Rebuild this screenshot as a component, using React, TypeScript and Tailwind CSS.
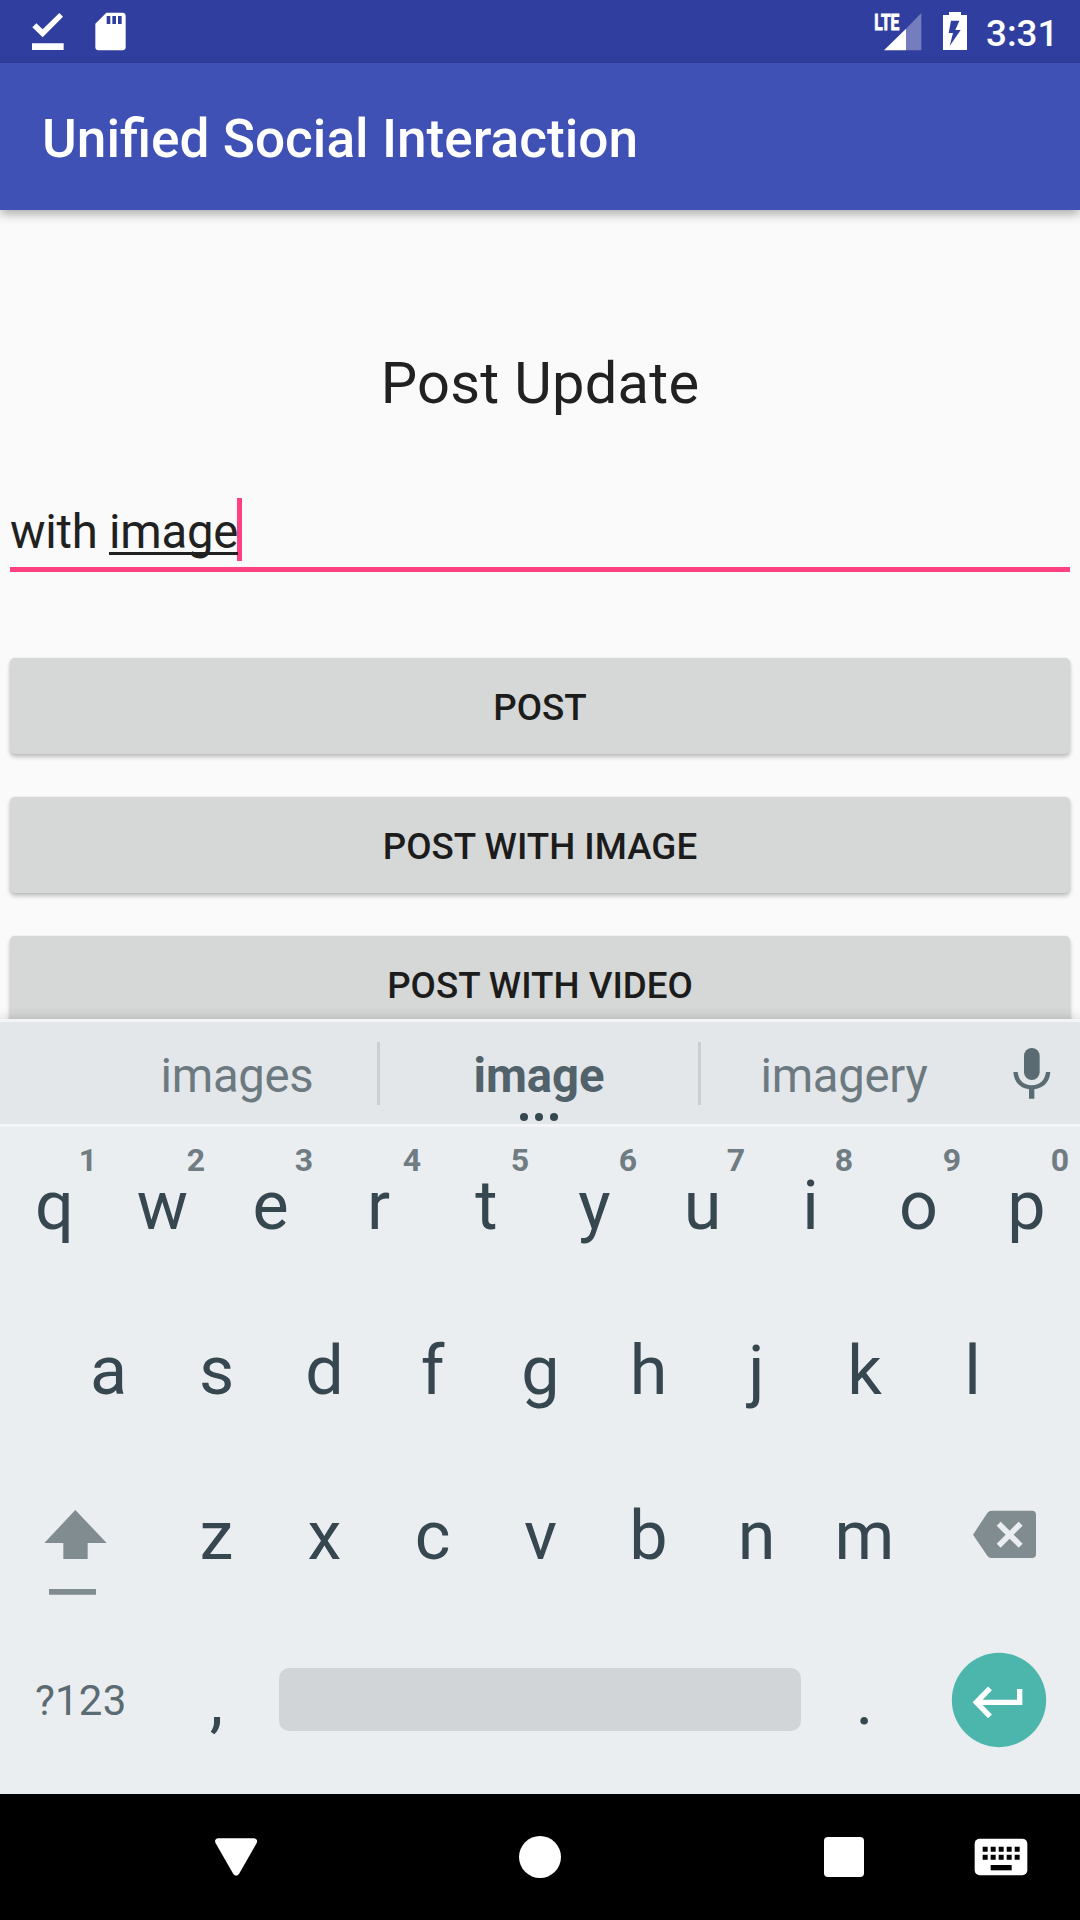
import React from "react";

function StatusBar() {
  return (
    <div className="flex h-[63px] shrink-0 items-start bg-[#303f9f] pl-8 text-white">
      <svg className="mt-3 h-[39px] w-8" viewBox="96 36 96 117" fill="white">
        <path d="M97 82 109 70 128 88 178 39 189 50 128 112ZM96 130H191V150H96Z" />
      </svg>
      <svg className="mt-3 ml-[31px] h-[39px] w-[31px]" viewBox="285 36 93 117" fill="white" fillRule="evenodd">
        <path d="M319 38H367Q377 38 377 48V141Q377 151 367 151H296Q286 151 286 141V71ZM320 48V72H331V48ZM337 48V72H348V48ZM354 48V72H365V48Z" />
      </svg>
      <svg className="mt-3 ml-auto h-[39px] w-12 overflow-visible" viewBox="162 36 144 117" fill="white">
        <text x="163" y="89" fontFamily="Roboto" fontWeight="700" fontSize="68" textLength="75" lengthAdjust="spacingAndGlyphs" stroke="white" strokeWidth="3">LTE</text>
        <path d="M258 86 304 39V151H258Z" fillOpacity="0.33" />
        <path d="M192 151 258 86V151Z" />
      </svg>
      <svg className="mt-3 ml-5 h-[39px] w-[26px]" viewBox="366 36 78 117" fill="white" fillRule="evenodd">
        <path d="M387 36H423V45H441V150H369V45H387ZM393 62 386 99H399L389 138 422 90H406L418 62Z" />
      </svg>
      <div className="ml-[18px] w-[94px] pt-[2px] text-[36.75px] leading-[63px] font-medium">3:31</div>
    </div>
  );
}

function PostButton({ label }: { label: string }) {
  return (
    <button className="h-[96px] w-full shrink-0 rounded-[5px] bg-[#d6d8d7] pt-px text-[36.75px] leading-[97px] font-medium text-[#1c1c1c] shadow-[0_3px_4px_rgba(0,0,0,0.24),0_0_2px_rgba(0,0,0,0.1)]">
      {label}
    </button>
  );
}

function Key({ label, hint }: { label: string; hint?: string }) {
  return (
    <div className="relative h-[165px] w-[108px] shrink-0 pl-px text-center text-[68.25px] leading-[167px] text-[#37474f]">
      {label}
      {hint && (
        <span className="absolute top-[21px] right-[11px] text-[32px] leading-8 font-bold text-[#6f7c82]">{hint}</span>
      )}
    </div>
  );
}

function Suggestions() {
  return (
    <div className="relative flex h-[108px] shrink-0 items-center border-y-[3px] border-[#f3f5f6] bg-[#e3e7ea] pl-[97px] text-[47.25px] leading-[102px] text-[#6c7a80]">
      <div className="w-[280px] pt-[6px] text-center tracking-[-0.3px]">images</div>
      <div className="h-[63px] w-[3px] bg-[#c9cfd2]" />
      <div className="w-[318px] pt-[6px] text-center font-bold text-[#52626a]">image</div>
      <div className="h-[63px] w-[3px] bg-[#c9cfd2]" />
      <div className="w-[286px] pt-[6px] text-center tracking-[-0.3px]">imagery</div>
      <svg className="ml-[26px] h-[53px] w-[38px]" viewBox="879 138 114 159" fill="#5b6b72">
        <rect x="912" y="141" width="47" height="96" rx="23.5" />
        <path d="M880 213H893Q898 252 935 253Q972 252 978 213H991Q987 258 943 265V293H927V265Q884 258 880 213Z" />
      </svg>
      <div className="absolute bottom-[3px] left-[520px] flex gap-[7px]">
        <i className="size-2 rounded-full bg-[#37474f]" />
        <i className="size-2 rounded-full bg-[#37474f]" />
        <i className="size-2 rounded-full bg-[#37474f]" />
      </div>
    </div>
  );
}

function Keyboard() {
  return (
    <div className="relative flex h-[775px] shrink-0 flex-col bg-[#ebeef1] shadow-[0_0_12px_rgba(0,0,0,0.2)]">
      <Suggestions />
      <div className="-mt-1 flex">
        {"qwertyuiop".split("").map((k, i) => (
          <Key key={k} label={k} hint={String((i + 1) % 10)} />
        ))}
      </div>
      <div className="flex pl-[54px]">
        {"asdfghjkl".split("").map((k) => (
          <Key key={k} label={k} />
        ))}
      </div>
      <div className="flex">
        <div className="w-[162px] pt-14 pl-11">
          <svg className="h-[87px] w-[63px]" viewBox="132 117 189 261" fill="#808c90">
            <path d="M226 120 320 219H263V267H190V219H133ZM147 357H288V374H147Z" />
          </svg>
        </div>
        {"zxcvbnm".split("").map((k) => (
          <Key key={k} label={k} />
        ))}
        <div className="pt-[57px] pl-[54px]">
          <svg className="h-[49px] w-[65px]" viewBox="696 120 195 147">
            <path d="M754 122H876Q888 122 888 134V252Q888 264 876 264H754Q747 264 742 257L699 194 742 129Q747 122 754 122Z" fill="#808c90" />
            <path d="M776 161 842 227M842 161 776 227" stroke="#ebeef1" strokeWidth="17" />
          </svg>
        </div>
      </div>
      <div className="flex items-center">
        <div className="w-[162px] pl-[35px] text-[42px] leading-[165px] tracking-[0.2px] text-[#5b6b72]">?123</div>
        <Key label="," />
        <div className="mx-[9px] mb-[2px] h-[63px] w-[522px] rounded-[10px] bg-[#d1d5d8]" />
        <Key label="." />
        <svg className="mb-[2px] ml-[33px] h-24 w-24" viewBox="633 546 288 288">
          <circle cx="777" cy="690" r="141.5" fill="#4db6ac" />
          <path d="M839 657V697H712M750 655 709 697 750 739" fill="none" stroke="white" strokeWidth="16" />
        </svg>
      </div>
    </div>
  );
}

function NavBar() {
  return (
    <div className="flex h-[126px] shrink-0 items-center bg-black pl-[215px]">
      <svg className="h-[42px] w-[42px]" viewBox="105 168 126 126" fill="white">
        <path d="M115 175H222Q235 177 230 189L177 282Q168 292 160 282L107 190Q101 177 115 175Z" />
      </svg>
      <div className="ml-[262px] size-[42px] rounded-full bg-white" />
      <div className="ml-[263px] size-10 rounded-[4px] bg-white" />
      <svg className="ml-[110px] h-[38px] w-[54px]" viewBox="703 175 162 114">
        <rect x="705" y="177" width="158" height="110" rx="15" fill="white" />
        {[729, 753, 777, 801, 825].map((x) => (
          <path key={x} d={`M${x} 201h15v15h-15ZM${x} 225h15v15h-15Z`} />
        ))}
        <rect x="753" y="256" width="63" height="16" />
      </svg>
    </div>
  );
}

export default function App() {
  return (
    <div className="flex h-[1920px] w-[1080px] flex-col overflow-hidden bg-[#fafafa] font-[Roboto,sans-serif]">
      <StatusBar />
      <header className="relative z-10 h-[147px] shrink-0 bg-[#3f51b5] pt-[3px] pl-[42px] text-[53.2px] leading-[147px] font-medium text-white shadow-[0_4px_10px_rgba(0,0,0,0.32)]">
        Unified Social Interaction
      </header>
      <main className="flex h-[809px] shrink-0 flex-col overflow-hidden px-[10px]">
        <h1 className="mt-[133px] h-20 shrink-0 text-center text-[57.75px] leading-[80px] tracking-[0.3px] text-[#212121]">Post Update</h1>
        <div className="mt-[69px] flex h-[80px] shrink-0 items-start border-b-[5px] border-[#ff4081] pt-[6px] text-[47.25px] leading-[63px] tracking-[-0.24px] whitespace-pre text-[#212121]">
          <span className="pt-[3px]">with </span>
          <span className="relative pt-[3px]">
            image
            <i className="absolute bottom-[9px] left-0 h-[3px] w-full bg-[#212121]" />
          </span>
          <i className="-ml-px h-[63px] w-[5px] bg-[#ff4081]" />
        </div>
        <div className="mt-[86px] flex shrink-0 flex-col gap-[43px]">
          <PostButton label="POST" />
          <PostButton label="POST WITH IMAGE" />
          <PostButton label="POST WITH VIDEO" />
        </div>
      </main>
      <Keyboard />
      <NavBar />
    </div>
  );
}
